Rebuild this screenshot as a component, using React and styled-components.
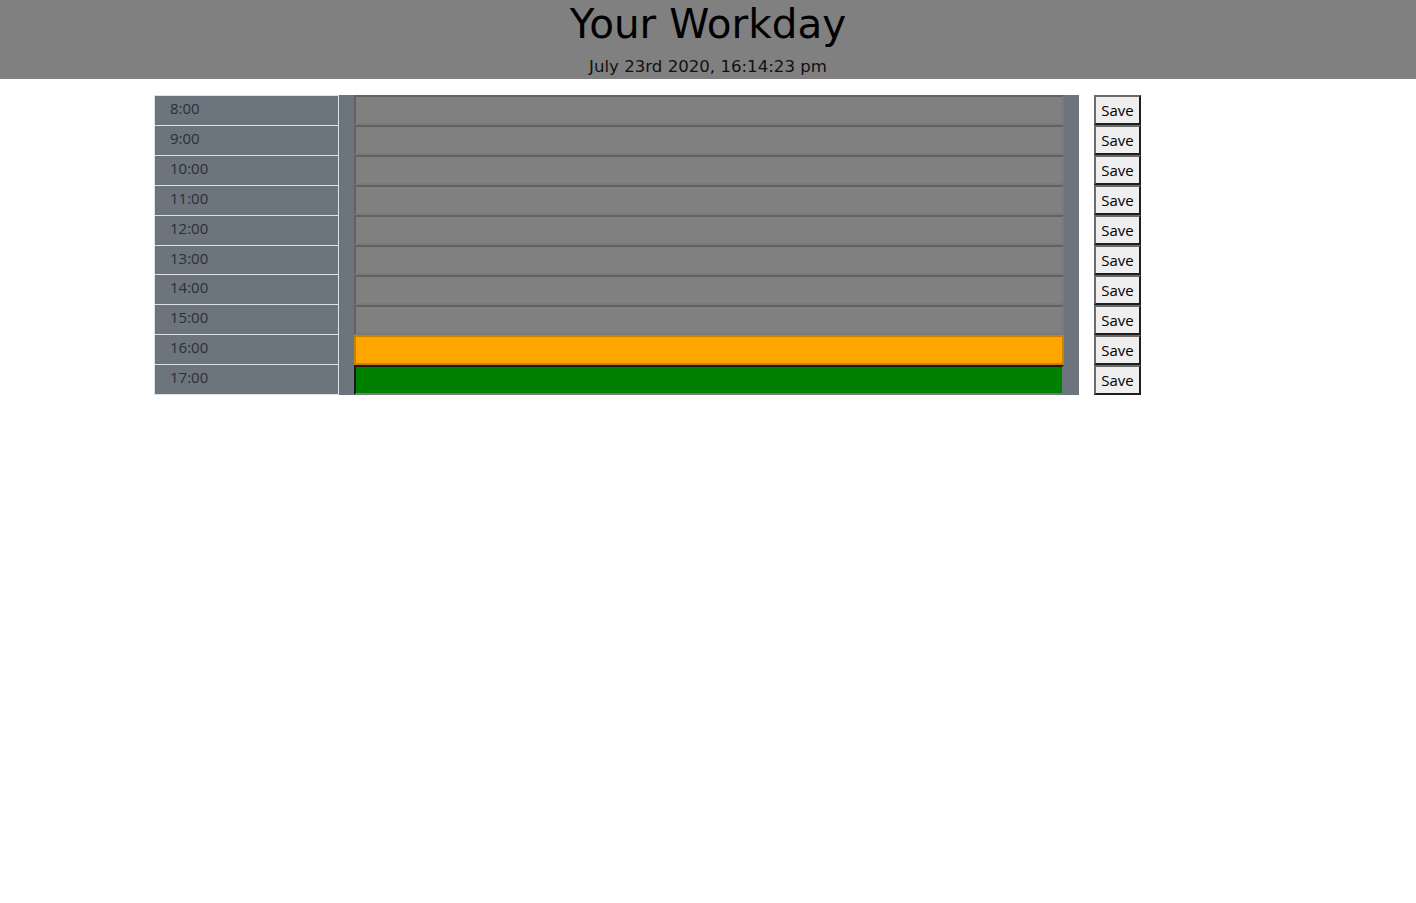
import React from "react";
import styled, { createGlobalStyle, css } from "styled-components";

const GlobalStyle = createGlobalStyle`
  html, body { margin: 0; padding: 0; background: #ffffff; }
  body { font-family: "Open Sans", "Noto Sans", sans-serif; color: #000; }
`;

const Header = styled.header`
  background: #808080;
  height: 79px;
  text-align: center;
  box-sizing: border-box;
  font-family: "DejaVu Sans", Verdana, sans-serif;
`;

const Title = styled.h1`
  margin: 0;
  font-size: 40.5px;
  line-height: 48px;
  font-weight: 400;
  color: #000;
`;

const CurrentDay = styled.p`
  margin: 7px 0 0;
  font-size: 16.6px;
  line-height: 24px;
  color: #111;
`;

const Planner = styled.main`
  display: grid;
  grid-template-columns: 185px 740px 47px;
  margin: 16px 0 0 154px;
`;

const HourColumn = styled.div`
  display: flex;
  flex-direction: column;
  border-bottom: 1px solid #dee2e6;
  height: 300px;
  box-sizing: border-box;
`;

const HourCell = styled.div`
  height: 30px;
  box-sizing: border-box;
  background: #6c757d;
  border: 1px solid #dee2e6;
  border-bottom: none;
  padding-left: 15px;
  font-size: 15px;
  line-height: 25px;
  color: #2b3035;
`;

const NotesPanel = styled.div`
  background: #6c757d;
  padding: 0 15px;
  display: flex;
  flex-direction: column;
  height: 300px;
  box-sizing: border-box;
`;

const tones = {
  past: css`
    background: #808080;
    border-color: #626262 #7a7a7a #7a7a7a #626262;
  `,
  present: css`
    background: #ffa500;
    border-color: #c98300 #c98300 #c98300 #c98300;
  `,
  future: css`
    background: #008000;
    border-color: #1a1a1a #6c757d #7a7a7a #1a1a1a;
  `,
};

const Note = styled.textarea`
  display: block;
  width: 100%;
  height: 30px;
  box-sizing: border-box;
  margin: 0;
  padding: 2px 4px;
  resize: none;
  border-width: 2px;
  border-style: solid;
  font-family: inherit;
  font-size: 14px;
  outline: none;
  ${(p) => tones[p.$tone]}
`;

const ButtonColumn = styled.div`
  display: flex;
  flex-direction: column;
  margin-left: 15px;
`;

const SaveBtn = styled.button`
  height: 30px;
  width: 47px;
  box-sizing: border-box;
  margin: 0;
  padding: 0;
  background: #efefef;
  border-width: 2px;
  border-style: solid;
  border-color: #6a6a6a #1e1e1e #1e1e1e #6a6a6a;
  font-family: "Open Sans", "Noto Sans", sans-serif;
  font-size: 15px;
  line-height: 24px;
  color: #000;
  cursor: pointer;
`;

const hours = [8, 9, 10, 11, 12, 13, 14, 15, 16, 17];
const now = 16;

export default function App() {
  return (
    <>
      <GlobalStyle />
      <Header>
        <Title>Your Workday</Title>
        <CurrentDay>July 23rd 2020, 16:14:23 pm</CurrentDay>
      </Header>
      <Planner>
        <HourColumn>
          {hours.map((h) => (
            <HourCell key={h}>{h}:00</HourCell>
          ))}
        </HourColumn>
        <NotesPanel>
          {hours.map((h) => (
            <Note
              key={h}
              $tone={h < now ? "past" : h === now ? "present" : "future"}
            />
          ))}
        </NotesPanel>
        <ButtonColumn>
          {hours.map((h) => (
            <SaveBtn key={h}>Save</SaveBtn>
          ))}
        </ButtonColumn>
      </Planner>
    </>
  );
}
